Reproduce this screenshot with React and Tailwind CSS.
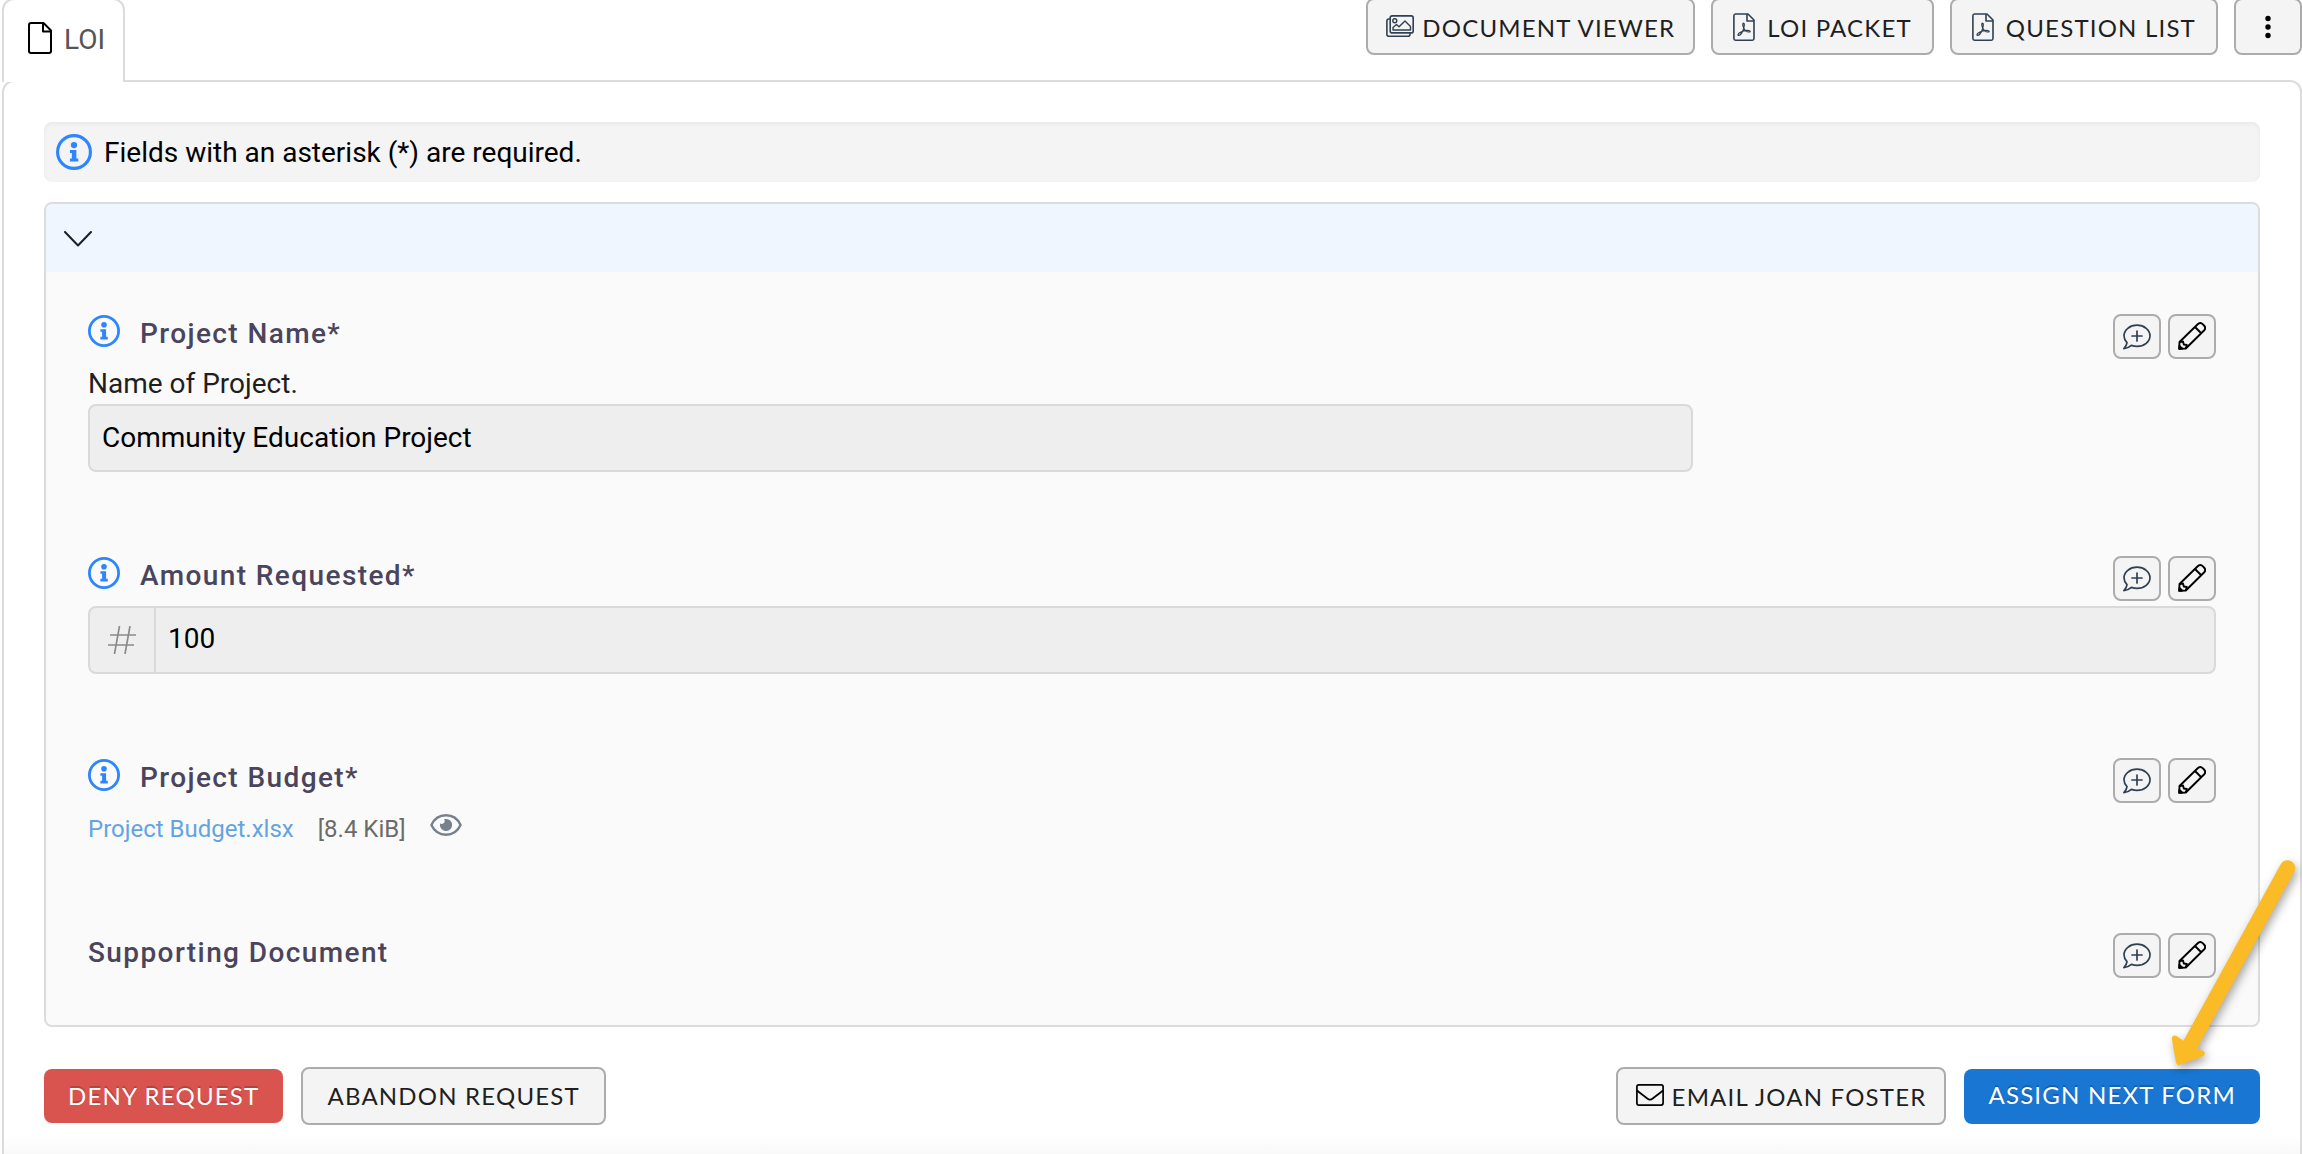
import React from "react";

const FONT_BODY = "font-['Roboto','Liberation_Sans',sans-serif]";
const FONT_BUTTON = "font-['Lato','Liberation_Sans',sans-serif]";

function FileIcon({ className }) {
  return (
    <svg viewBox="0 0 24 32" className={className} fill="none" stroke="currentColor" strokeWidth="2" strokeLinejoin="round" aria-hidden="true">
      <path d="M3 1h12.5L23 8.5V29a2 2 0 0 1-2 2H3a2 2 0 0 1-2-2V3a2 2 0 0 1 2-2z" />
      <path d="M15 1v8.5h8" />
    </svg>
  );
}

function PdfIcon() {
  return (
    <svg viewBox="0 0 22 28" className="mb-0.5 h-7 w-[22px]" fill="none" stroke="#2f4052" strokeWidth="1.6" strokeLinejoin="round" aria-hidden="true">
      <path d="M2.5 1H15l6 6v18.5a1.7 1.7 0 0 1-1.7 1.7H2.5A1.7 1.7 0 0 1 .9 25.5V2.7A1.7 1.7 0 0 1 2.5 1z" />
      <path d="M14 1v7h7" />
      <path strokeWidth="1.2" d="M10.200 10.300c1.300-.6 1.500 1.700.5 5-.9 2.900-3.200 7-4.900 7.200-1.500.1-.9-1.900 1.200-3 2.600-1.400 6.200-2.200 8.700-2 2 .2 1.900 1.700.1 1.500-2.300-.2-4.300-2.200-5.300-4.500-.7-1.700-.9-3.700-.3-4.200z" />
    </svg>
  );
}

function ImagesIcon() {
  return (
    <svg viewBox="0 0 28 22" className="mb-1 h-[22px] w-7" fill="none" stroke="#2f4052" strokeWidth="1.600" strokeLinejoin="round" aria-hidden="true">
      <rect x="4.200" y="0.900" width="23" height="17" rx="2" />
      <path d="M4 4H2.800A2 2 0 0 0 .9 6v13.200a2 2 0 0 0 2 2H22a2 2 0 0 0 2-2V18.200" />
      <circle cx="8.800" cy="5.700" r="2" strokeWidth="1.400" />
      <path strokeWidth="1.400" d="M7 15v-2.500l3.500-3 2.500 2.300 6-5.800 5.500 5.500V15z" />
    </svg>
  );
}

function DotsIcon() {
  return (
    <svg viewBox="0 0 6 24" className="h-6 w-1.5" fill="#000" aria-hidden="true">
      <circle cx="3" cy="3.500" r="2.700" />
      <circle cx="3" cy="12" r="2.700" />
      <circle cx="3" cy="20.500" r="2.700" />
    </svg>
  );
}

function InfoIcon({ className }) {
  return (
    <svg viewBox="0 0 32 32" className={className} aria-hidden="true">
      <circle cx="16" cy="16" r="14.600" fill="none" stroke="#2d86ff" strokeWidth="2.800" />
      <circle cx="16" cy="9.800" r="2.800" fill="#2d86ff" />
      <path fill="#2d86ff" d="M12.400 14.200h5.700v7.600h1.700v2.600h-7.400v-2.600h1.700v-5h-1.700z" />
    </svg>
  );
}

function CommentPlusIcon() {
  return (
    <svg viewBox="0 0 28 26" className="h-[26px] w-7" fill="none" stroke="#2f4052" strokeWidth="1.700" strokeLinejoin="round" strokeLinecap="round" aria-hidden="true">
      <path d="M14 1.200c7.200 0 13 4.700 13 10.600s-5.800 10.600-13 10.600c-2 0-3.900-.4-5.600-1C6.700 22.900 4 24.400.9 24.600c1.400-1.500 2.900-3.600 3.100-6C2.200 16.700 1 14.400 1 11.800 1 5.900 6.800 1.200 14 1.200z" />
      <path d="M14 7v10M9 12h10" />
    </svg>
  );
}

function PencilIcon() {
  return (
    <svg viewBox="0 0 28 28" className="mb-0.5 size-7" fill="none" stroke="#000" strokeWidth="1.900" strokeLinejoin="round" aria-hidden="true">
      <path d="M1.200 26.800 1.500 20 19.700 2.200c1.600-1.500 3.500-1.500 5 0l1.300 1.300c1.500 1.500 1.500 3.400 0 5L7.800 26.500z" />
      <path d="m17 5 6.500 6.500" />
      <path d="M1.800 20 5 19.500l.8 3 3 .5-1 3.500" />
      <path d="M1.200 26.800l.3-3 2.700 2.800z" fill="#000" />
    </svg>
  );
}

function EyeIcon() {
  return (
    <svg viewBox="0 0 32 22" className="h-[22px] w-8" aria-hidden="true">
      <path d="M1.400 11C4.200 5 9.800 1.300 16 1.300S27.800 5 30.600 11C27.800 17 22.200 20.700 16 20.700S4.200 17 1.400 11z" fill="none" stroke="#76818d" strokeWidth="2.400" strokeLinejoin="round" />
      <path d="M16 4.900a6.100 6.100 0 1 1-5.900 4.600c1.500.8 3.400.5 4.200-.9.700-1.200.4-2.500-.3-3.400a6.100 6.100 0 0 1 2-.3z" fill="#76818d" />
    </svg>
  );
}

function HashIcon() {
  return (
    <svg viewBox="0 0 28 28" className="size-7" fill="none" stroke="#8a8a8a" strokeWidth="1.700" aria-hidden="true">
      <path d="M11.500 0 6.500 28M22 0l-5 28M2 9h26M0 19h26" />
    </svg>
  );
}

function MailIcon() {
  return (
    <svg viewBox="0 0 28 22" className="mb-1 h-[22px] w-7" fill="none" stroke="#000" strokeWidth="1.700" strokeLinejoin="round" aria-hidden="true">
      <rect x="0.900" y="0.900" width="26.200" height="20.200" rx="2" />
      <path d="M1 6.500c4 3.300 7.500 5.800 10.300 8 2 1.600 3.400 1.600 5.400 0C19.500 12.300 23 9.800 27 6.500" />
    </svg>
  );
}

function ArrowDrawing() {
  return (
    <svg viewBox="0 0 140 230" className="pointer-events-none absolute -right-10 bottom-[43px] h-[230px] w-[140px] overflow-visible drop-shadow-[2px_4px_5px_rgba(0,0,0,0.35)]" aria-hidden="true">
      <path d="M127.500 17 30 194" stroke="#fbbb27" strokeWidth="15.500" strokeLinecap="round" />
      <path d="M14.800 187.500 24 194l8 5 9.700 3.500L19 211z" fill="#fbbb27" stroke="#fbbb27" strokeWidth="6" strokeLinejoin="round" />
    </svg>
  );
}

function OutlineButton({ children, className }) {
  return (
    <button type="button" className={`${FONT_BUTTON} flex items-center rounded-lg border-2 border-[#acacac] bg-[#f4f4f4] text-2xl tracking-wider text-[#1f1f1f] uppercase ${className}`}>
      {children}
    </button>
  );
}

function FieldActions({ name }) {
  const style = "flex h-[45px] w-12 items-center justify-center rounded-lg border-2 border-[#acacac] bg-[#f4f4f4]";
  return (
    <div className="flex gap-[7px]">
      <button type="button" className={style} aria-label={`Comment on ${name}`}><CommentPlusIcon /></button>
      <button type="button" className={style} aria-label={`Edit ${name}`}><PencilIcon /></button>
    </div>
  );
}

const LABEL = "text-[28px] leading-10 font-medium tracking-wider text-[#4a455c]";

function Field({ name, htmlFor, required, children }) {
  const text = required ? `${name}*` : name;
  return (
    <section>
      <div className="flex h-[50px] items-start justify-between">
        <div className="flex items-start gap-5">
          {required && <InfoIcon className="mt-px size-8" />}
          {htmlFor ? <label htmlFor={htmlFor} className={LABEL}>{text}</label> : <h2 className={LABEL}>{text}</h2>}
        </div>
        <FieldActions name={name} />
      </div>
      {children}
    </section>
  );
}

export default function App() {
  return (
    <div className={`${FONT_BODY} flex min-h-screen flex-col bg-white pl-0.5 text-black`}>
      <header className="-mt-0.5 flex items-start justify-between">
        <nav className="relative z-10 -mb-0.5">
          <a href="#loi" className="flex h-[84px] items-center gap-3 rounded-t-xl border-2 border-b-0 border-[#dcdcdc] bg-white pr-[18px] pb-0.5 pl-6 text-[28px] text-[#555]">
            <FileIcon className="mb-1 h-8 w-6 text-black" />
            LOI
          </a>
        </nav>
        <div className="flex gap-4">
          <OutlineButton className="h-[57px] gap-2 px-[18px] pt-0.5"><ImagesIcon />Document Viewer</OutlineButton>
          <OutlineButton className="h-[57px] gap-3 px-5 pt-0.5"><PdfIcon />LOI Packet</OutlineButton>
          <OutlineButton className="h-[57px] gap-3 px-5 pt-0.5"><PdfIcon />Question List</OutlineButton>
          <button type="button" aria-label="More actions" className="flex h-[57px] w-[68px] items-center justify-center rounded-lg border-2 border-[#acacac] bg-[#f4f4f4]"><DotsIcon /></button>
        </div>
      </header>

      <main className="flex-1 rounded-t-xl border-2 border-b-0 border-[#dcdcdc] bg-linear-to-t from-[#f9f9f9] to-white to-[20px] px-10 pt-10">
        <div className="flex h-[60px] items-center gap-3 rounded-lg bg-[#f4f4f4] px-3 text-[28px] shadow-[inset_0_2px_4px_rgba(0,0,0,0.05)]">
          <InfoIcon className="size-9" />
          <p className="pt-0.5">Fields with an asterisk (*) are required.</p>
        </div>

        <div className="mt-5 overflow-hidden rounded-lg border-2 border-[#dcdcdc] bg-[#fafafa]">
          <button type="button" aria-label="Collapse section" aria-expanded="true" className="flex h-[68px] w-full items-center bg-[#eff6ff] px-[18px] pt-0.5">
            <svg viewBox="0 0 28 16" className="h-4 w-7" fill="none" stroke="#1c1f24" strokeWidth="2" strokeLinecap="round" strokeLinejoin="round" aria-hidden="true">
              <path d="m1 1 13 13.500L27 1" />
            </svg>
          </button>

          <div className="flex flex-col gap-[84px] p-[42px]">
            <Field name="Project Name" htmlFor="project-name" required>
              <p className="text-[28px] leading-10 text-[#1f1f1f]">Name of Project.</p>
              <input id="project-name" readOnly defaultValue="Community Education Project" className="block h-[68px] w-[75.4%] rounded-lg border-2 border-[#d9d9d9] bg-[#eee] px-3 pb-0.5 text-[28px]" />
            </Field>

            <Field name="Amount Requested" htmlFor="amount" required>
              <div className="flex h-[68px] overflow-hidden rounded-lg border-2 border-[#d9d9d9] bg-[#eee]">
                <span className="flex w-[66px] items-center justify-center border-r-2 border-[#d9d9d9]"><HashIcon /></span>
                <input id="amount" readOnly defaultValue="100" className="min-w-0 flex-1 px-3 pb-0.5 text-[28px]" />
              </div>
            </Field>

            <Field name="Project Budget" required>
              <div className="flex h-[41px] items-center gap-6 text-2xl">
                <a href="#budget" className="text-[#63a4e0]">Project Budget.xlsx</a>
                <span className="text-[#6b6b6b]">[8.4 KiB]</span>
                <button type="button" aria-label="Preview Project Budget.xlsx" className="mb-2"><EyeIcon /></button>
              </div>
            </Field>

            <Field name="Supporting Document" />
          </div>
        </div>

        <footer className="mt-10 flex items-center justify-between pb-6">
          <div className="flex items-center gap-[18px]">
            <button type="button" className={`${FONT_BUTTON} h-[54px] rounded-lg bg-[#d9534f] px-6 text-2xl tracking-wider text-white uppercase [text-shadow:0_-2px_0_rgba(0,0,0,0.2)]`}>Deny Request</button>
            <OutlineButton className="h-[58px] px-6">Abandon Request</OutlineButton>
          </div>
          <div className="flex items-center gap-[18px]">
            <OutlineButton className="h-[58px] gap-2 px-[18px] pt-0.5"><MailIcon />Email Joan Foster</OutlineButton>
            <div className="relative">
              <button type="button" className={`${FONT_BUTTON} block h-[55px] rounded-lg bg-[#1976d2] px-6 pb-0.5 text-2xl tracking-wider text-white uppercase [text-shadow:0_-2px_0_rgba(0,0,0,0.2)]`}>Assign Next Form</button>
              <ArrowDrawing />
            </div>
          </div>
        </footer>
      </main>
    </div>
  );
}
